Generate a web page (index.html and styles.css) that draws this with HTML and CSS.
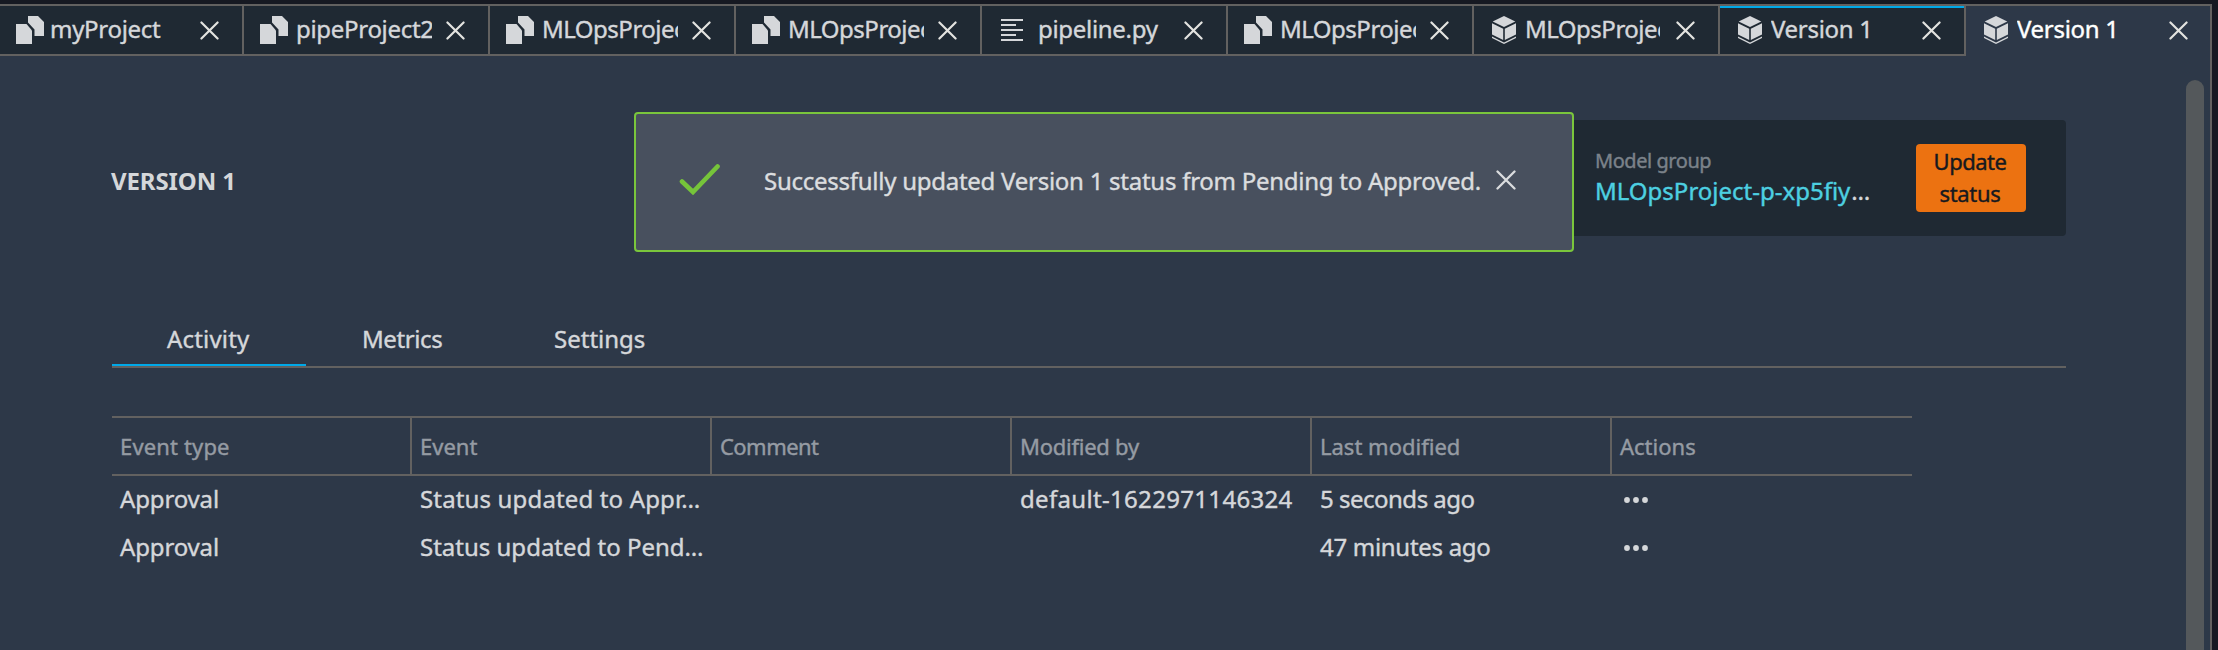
FILE: index.html
```
<!DOCTYPE html>
<html lang="en">
<head>
<meta charset="utf-8">
<title>Version 1</title>
<link rel="stylesheet" href="styles.css">
</head>
<body>
<svg class="defs" width="0" height="0">
  <symbol id="files" viewBox="0 0 28 28"><path d="M0 8H10.500L16 14.500V28H0Z"/><path d="M12 0H22L28 6V20H18.500V13.500L12 6.500Z"/></symbol>
  <symbol id="cube" viewBox="0 0 24 28"><path d="M12 0L23.300 5.400L12 11L.700 5.400Z"/><path d="M0 7.300L11.200 12.800V24L0 18.500Z"/><path d="M24 7.300L12.800 12.800V24L24 18.500Z"/><path d="M0 20.600L12 26.500L24 20.600V22.100L12 28L0 22.100Z"/></symbol>
  <symbol id="lines" viewBox="0 0 22 22"><path d="M0 0H22V2H0ZM0 5H15V7H0ZM0 10H22V12H0ZM0 15H15V17H0ZM0 20H22V22H0Z"/></symbol>
  <symbol id="close" viewBox="0 0 20 20"><path d="M1.500 1.500L18.500 18.500M18.500 1.500L1.500 18.500" fill="none" stroke="currentColor" stroke-width="2.300" stroke-linecap="round"/></symbol>
  <symbol id="dots" viewBox="0 0 24 6"><circle cx="3" cy="3" r="2.900"/><circle cx="12" cy="3" r="2.900"/><circle cx="21" cy="3" r="2.900"/></symbol>
</svg>
<div class="window">
  <nav class="tabs">
    <div class="tab first"><svg class="icon files"><use href="#files"/></svg><span class="label">myProject</span><svg class="close"><use href="#close"/></svg></div>
    <div class="tab"><svg class="icon files"><use href="#files"/></svg><span class="label">pipeProject2</span><svg class="close"><use href="#close"/></svg></div>
    <div class="tab"><svg class="icon files"><use href="#files"/></svg><span class="label tight">MLOpsProject</span><svg class="close"><use href="#close"/></svg></div>
    <div class="tab"><svg class="icon files"><use href="#files"/></svg><span class="label tight">MLOpsProject</span><svg class="close"><use href="#close"/></svg></div>
    <div class="tab"><svg class="icon lines"><use href="#lines"/></svg><span class="label python">pipeline.py</span><svg class="close"><use href="#close"/></svg></div>
    <div class="tab"><svg class="icon files"><use href="#files"/></svg><span class="label tight">MLOpsProject</span><svg class="close"><use href="#close"/></svg></div>
    <div class="tab"><svg class="icon cube"><use href="#cube"/></svg><span class="label tight">MLOpsProject</span><svg class="close"><use href="#close"/></svg></div>
    <div class="tab marked"><svg class="icon cube"><use href="#cube"/></svg><span class="label">Version 1</span><svg class="close"><use href="#close"/></svg></div>
    <div class="tab current"><svg class="icon cube"><use href="#cube"/></svg><span class="label">Version 1</span><svg class="close"><use href="#close"/></svg></div>
  </nav>
  <div class="body">
    <main class="page">
      <header class="header">
        <h1 class="title">VERSION 1</h1>
        <section class="summary">
          <div class="group">
            <div class="group-label">Model group</div>
            <div class="group-name"><a class="link">MLOpsProject-p-xp5fiy</a><span class="more">…</span></div>
          </div>
          <button class="update"><span class="update-top">Update</span><span>status</span></button>
        </section>
        <div class="toast">
          <svg class="check" viewBox="0 0 42 32"><path d="M3 18.500L14 29L38.500 3.500" fill="none" stroke="currentColor" stroke-width="4.600" stroke-linecap="round"/></svg>
          <span class="message">Successfully updated Version 1 status from Pending to Approved.</span>
          <svg class="dismiss"><use href="#close"/></svg>
        </div>
      </header>
      <div class="views">
        <div class="view active">Activity</div>
        <div class="view metrics">Metrics</div>
        <div class="view settings">Settings</div>
      </div>
      <div class="table">
        <div class="row head">
          <div class="cell wide">Event type</div><div class="cell">Event</div><div class="cell comment">Comment</div><div class="cell snug">Modified by</div><div class="cell">Last modified</div><div class="cell">Actions</div>
        </div>
        <div class="row">
          <div class="cell approval">Approval</div><div class="cell wide">Status updated to Appr…</div><div class="cell"></div><div class="cell account">default-1622971146324</div><div class="cell seconds">5 seconds ago</div><div class="cell"><svg class="dots"><use href="#dots"/></svg></div>
        </div>
        <div class="row">
          <div class="cell approval">Approval</div><div class="cell">Status updated to Pend…</div><div class="cell"></div><div class="cell"></div><div class="cell minutes">47 minutes ago</div><div class="cell"><svg class="dots"><use href="#dots"/></svg></div>
        </div>
      </div>
    </main>
    <div class="scrollbar"></div>
  </div>
</div>
</body>
</html>
```
FILE: styles.css
```
* { box-sizing: border-box; }
body {
  margin: 0;
  height: 650px;
  overflow: hidden;
  padding: 4px 6px 0 0;
  background: #161922;
  color: #d5d7da;
  font: 24px/46px "Noto Sans", "Open Sans", sans-serif;
  -webkit-text-stroke: 0.4px currentColor;
}
.defs { position: absolute; }
svg { flex: none; fill: currentColor; display: block; }
.window {
  display: flex;
  flex-direction: column;
  height: 646px;
  border-top: 2px solid #626160;
  border-right: 2px solid #626160;
  background: #2d3848;
}

/* document tabs */
.tabs { display: flex; }
.tab {
  display: flex;
  align-items: center;
  width: 246px;
  height: 50px;
  padding: 0 23px 2px 16px;
  background: #1f2933;
  border-right: 2px solid #626160;
  border-bottom: 2px solid #626160;
}
.tab.first { width: 244px; }
.tab.first .files { margin-right: 6px; }
.tab.marked { box-shadow: inset 0 2px #00a8e8; }
.tab.current { width: 244px; border: 0; background: none; padding: 0 22px 4px 16px; }
.tab.current .label { color: #fff; }
.files { width: 28px; height: 28px; margin-right: 8px; margin-top: 2px; }
.cube { width: 24px; height: 28px; margin: 2px 9px 0 2px; }
.lines { width: 22px; height: 22px; margin: 2px 15px 0 3px; }
.label {
  flex: none;
  width: 136px;
  overflow: hidden;
  white-space: nowrap;
  letter-spacing: -0.3px;
}
.tight { letter-spacing: -0.5px; }
.cube + .label { width: 135px; }
.python { width: 133px; }
.close { width: 19px; height: 19px; margin: 2px 0 0 auto; color: #e3e3e0; }

.body { display: flex; flex: 1; padding-right: 6px; }
.page { flex: 1; padding: 64px 120px 0 112px; }
.scrollbar {
  width: 18px;
  margin-top: 24px;
  border-radius: 9px 9px 0 0;
  background: #54585b;
}

/* title, summary and notification */
.header { position: relative; display: flex; justify-content: space-between; height: 116px; }
.title { margin: 38px 0 0 -1px; font-size: 24px; line-height: 46px; font-weight: 700; letter-spacing: -0.1px; -webkit-text-stroke: 0; }
.summary {
  display: flex;
  justify-content: space-between;
  width: 800px;
  padding: 24px 40px 24px 328px;
  border-radius: 4px;
  background: #1f2933;
}
.group { line-height: 30px; }
.group-label { height: 30px; margin-top: 2px; font-size: 20px; letter-spacing: -0.45px; color: #7b828a; padding-left: 1px; }
.group-name { white-space: nowrap; padding-left: 1px; }
.link { color: #4dd0e1; }
.more { letter-spacing: 1px; margin-left: 1px; }
.update {
  display: flex;
  flex-direction: column;
  width: 110px;
  height: 68px;
  padding: 1px 2px 0 0;
  border: 0;
  border-radius: 4px;
  align-items: center;
  background: #ec7211;
  color: #16191f;
  font: 22px/32px "Noto Sans", "Open Sans", sans-serif;
  letter-spacing: -0.3px;
}
.update-top { letter-spacing: -0.5px; }
.toast {
  position: absolute;
  left: 522px;
  top: -8px;
  display: flex;
  align-items: center;
  width: 940px;
  height: 140px;
  padding: 0 56px 2px 43px;
  border: 2px solid #7ac63c;
  border-radius: 4px;
  background: #48505e;
  color: #dbdddf;
}
.check { width: 42px; height: 32px; margin-top: -5px; color: #76c43a; }
.message { margin-left: 43px; white-space: nowrap; letter-spacing: -0.26px; }
.dismiss { width: 20px; height: 20px; margin-left: auto; margin-top: -2px; }

/* view switcher */
.views {
  display: flex;
  height: 52px;
  margin-top: 80px;
  border-bottom: 2px solid #626160;
}
.view { width: 192px; padding-left: 56px; }
.active { width: 194px; padding-left: 55px; border-bottom: 2px solid #00a8e8; letter-spacing: 0.18px; }
.metrics { letter-spacing: -0.4px; }

/* event table */
.table { width: 1800px; margin-top: 48px; }
.row { display: grid; grid-template-columns: repeat(6, 300px); height: 48px; }
.cell { padding-left: 8px; white-space: nowrap; }
.head {
  height: 60px;
  border-top: 2px solid #626160;
  border-bottom: 2px solid #626160;
  font-size: 22px;
  line-height: 56px;
  color: #959ba3;
}
.head .cell { border-right: 2px solid #626160; }
.head .cell:last-child { border-right: 0; }
.approval { letter-spacing: -0.15px; }
.wide { letter-spacing: 0.15px; }
.comment { letter-spacing: -0.55px; }
.snug { letter-spacing: -0.25px; }
.account { letter-spacing: 0.32px; }
.seconds { letter-spacing: -0.5px; }
.minutes { letter-spacing: -0.3px; }
.dots { width: 24px; height: 6px; margin: 21px 0 0 4px; }
```
